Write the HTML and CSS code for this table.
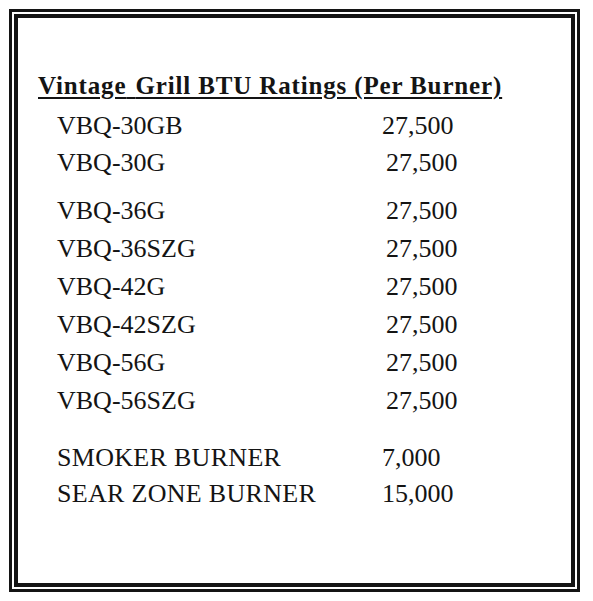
FILE: index.html
```html
<!DOCTYPE html>
<html lang="en">
<head>
<meta charset="utf-8">
<title>Vintage Grill BTU Ratings</title>
<link rel="stylesheet" href="styles.css">
</head>
<body>
<div class="frame">
  <div class="panel">
    <h1 class="title">Vintage<span class="wide-gap"> </span>Grill BTU Ratings (Per Burner)</h1>
    <div class="group group-a">
      <div class="row"><span class="model">VBQ-30GB</span><span class="btu btu-shift">27,500</span></div>
      <div class="row"><span class="model">VBQ-30G</span><span class="btu">27,500</span></div>
    </div>
    <div class="group group-b">
      <div class="row"><span class="model">VBQ-36G</span><span class="btu">27,500</span></div>
      <div class="row"><span class="model">VBQ-36SZG</span><span class="btu">27,500</span></div>
      <div class="row"><span class="model">VBQ-42G</span><span class="btu">27,500</span></div>
      <div class="row"><span class="model">VBQ-42SZG</span><span class="btu">27,500</span></div>
      <div class="row"><span class="model">VBQ-56G</span><span class="btu">27,500</span></div>
      <div class="row"><span class="model">VBQ-56SZG</span><span class="btu">27,500</span></div>
    </div>
    <div class="group group-c">
      <div class="row"><span class="model">SMOKER BURNER</span><span class="btu btu-shift">7,000</span></div>
      <div class="row"><span class="model">SEAR ZONE BURNER</span><span class="btu btu-shift">15,000</span></div>
    </div>
  </div>
</div>
</body>
</html>
```

FILE: styles.css
```css
html, body {
  margin: 0;
  padding: 0;
  background: #ffffff;
}

body {
  font-family: "Liberation Serif", "Times New Roman", serif;
  color: #141414;
}

.frame {
  box-sizing: border-box;
  width: 571px;
  height: 583px;
  margin: 9px 0 0 9px;
  border: 3px solid #141414;
  padding: 2px;
}

.panel {
  box-sizing: border-box;
  height: 100%;
  border: 4px solid #141414;
  padding: 52.6px 0 0 20px;
}

.title {
  margin: 0;
  font-size: 25px;
  line-height: 30px;
  font-weight: bold;
  letter-spacing: 0.85px;
  text-decoration: underline;
  text-decoration-thickness: 2px;
  text-underline-offset: 3px;
  white-space: nowrap;
}

.wide-gap {
  word-spacing: 2px;
}

.group {
  padding-left: 19px;
  font-size: 26px;
}

.group-a {
  margin-top: 6px;
  line-height: 37px;
}

.group-b {
  margin-top: 11.5px;
  line-height: 38px;
}

.group-c {
  margin-top: 20px;
  line-height: 36px;
}

.row {
  display: grid;
  grid-template-columns: 329px auto;
  white-space: nowrap;
}

.group-c .model {
  letter-spacing: 0.3px;
}

.btu-shift {
  margin-left: -4px;
}
```
